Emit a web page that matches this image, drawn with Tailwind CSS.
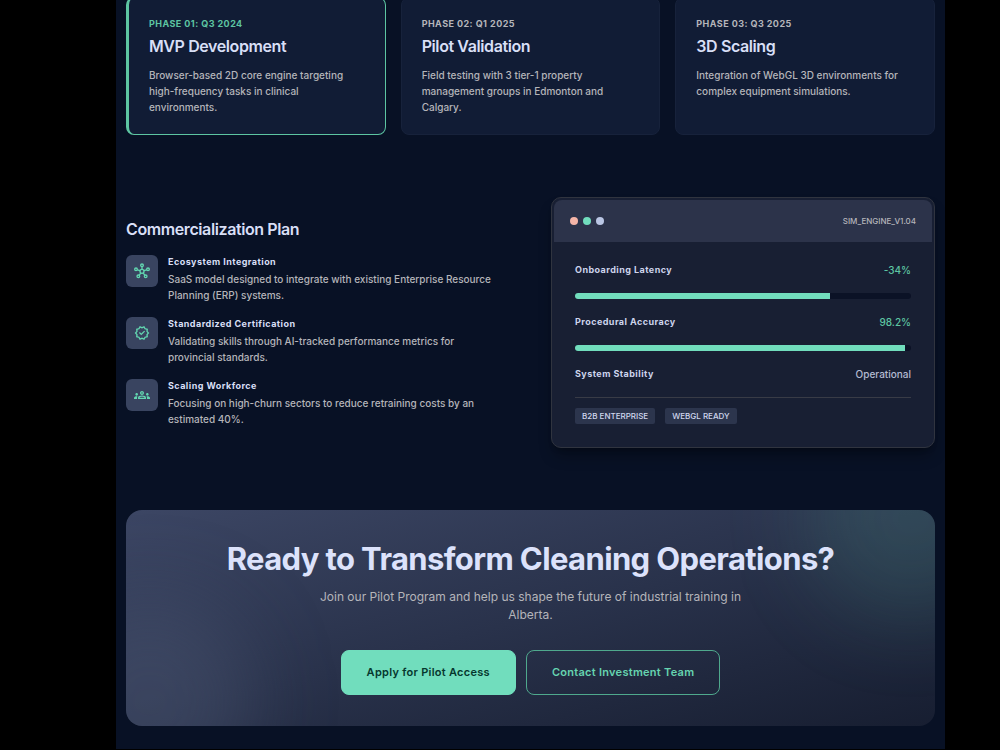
<!DOCTYPE html>
<html lang="en">
<head>
<meta charset="utf-8">
<meta name="viewport" content="width=device-width, initial-scale=1">
<title>Roadmap and Commercialization</title>
<script src="https://cdn.jsdelivr.net/npm/@tailwindcss/browser@4"></script>
</head>
<body class="bg-black pl-[116px] pr-[55px] font-['Inter',sans-serif] text-[10px] text-[#b5b5ba]">
<main class="flex flex-col gap-[62px] overflow-hidden bg-[#081125] px-[10px] pb-[23px]">

  <section aria-label="Roadmap" class="-mt-[3px] grid grid-cols-3 gap-[15px]">
    <article class="rounded-lg border border-l-[3px] border-[#5dc5a2] bg-[#111c35] px-5 py-[19px]">
      <p class="text-[9px] leading-[14px] font-bold tracking-wider text-[#5dc5a2]">PHASE 01: Q3 2024</p>
      <h3 class="mt-[5px] text-base leading-5 font-semibold tracking-tight text-[#d8dff6]">MVP Development</h3>
      <p class="mt-[11px] text-[10px] leading-4 font-medium">Browser-based 2D core engine targeting high-frequency tasks in clinical environments.</p>
    </article>
    <article class="rounded-lg border border-[#17223b] bg-[#111c35] px-5 py-[19px]">
      <p class="text-[9px] leading-[14px] font-bold tracking-wider">PHASE 02: Q1 2025</p>
      <h3 class="mt-[5px] text-base leading-5 font-semibold tracking-tight text-[#d8dff6]">Pilot Validation</h3>
      <p class="mt-[11px] text-[10px] leading-4 font-medium">Field testing with 3 tier-1 property management groups in Edmonton and Calgary.</p>
    </article>
    <article class="rounded-lg border border-[#17223b] bg-[#111c35] px-5 py-[19px]">
      <p class="text-[9px] leading-[14px] font-bold tracking-wider">PHASE 03: Q3 2025</p>
      <h3 class="mt-[5px] text-base leading-5 font-semibold tracking-tight text-[#d8dff6]">3D Scaling</h3>
      <p class="mt-[11px] text-[10px] leading-4 font-medium">Integration of WebGL 3D environments for complex equipment simulations.</p>
    </article>
  </section>

  <section class="grid grid-cols-2 items-center gap-[41px]">
    <div>
      <h2 class="text-base leading-5 font-semibold tracking-tight text-[#d8dff6]">Commercialization Plan</h2>
      <ul class="mt-4 flex flex-col gap-[14px]">
        <li class="flex items-start gap-[10px]">
          <span class="grid size-8 shrink-0 place-items-center rounded-md bg-[#394460] text-[#62d6b0]">
            <svg class="size-4" viewBox="0 0 24 24" fill="none" stroke="currentColor" stroke-width="2" aria-hidden="true">
              <circle cx="12" cy="12.5" r="3"/><circle cx="12" cy="3.5" r="2"/><circle cx="3" cy="9.5" r="2"/><circle cx="21" cy="9.5" r="2"/><circle cx="6.5" cy="20" r="2"/><circle cx="17.500" cy="20" r="2"/>
              <path d="M12 5.500v4M5 10.200l4.200 1.400M19 10.200l-4.200 1.400M7.700 18.400l2.400-3.200M16.300 18.400l-2.400-3.200"/>
            </svg>
          </span>
          <div>
            <h3 class="text-[9px] leading-[14px] font-bold tracking-wider text-[#d8dff6]">Ecosystem Integration</h3>
            <p class="mt-0.5 text-[10px] leading-4 font-medium">SaaS model designed to integrate with existing Enterprise Resource Planning (ERP) systems.</p>
          </div>
        </li>
        <li class="flex items-start gap-[10px]">
          <span class="grid size-8 shrink-0 place-items-center rounded-md bg-[#394460] text-[#62d6b0]">
            <svg class="size-4" viewBox="0 0 24 24" fill="currentColor" aria-hidden="true">
              <path d="M23 12l-2.440-2.790.340-3.690-3.610-.820-1.890-3.200L12 2.960 8.600 1.500 6.710 4.690 3.100 5.500l.340 3.700L1 12l2.440 2.790-.340 3.700 3.610.820L8.600 22.500l3.400-1.470 3.400 1.460 1.890-3.190 3.610-.820-.340-3.690L23 12zm-4.510 2.110l.260 2.790-2.740.620-1.430 2.410L12 18.820l-2.580 1.110-1.430-2.410-2.740-.620.260-2.800L3.660 12l1.850-2.120-.260-2.780 2.740-.610 1.430-2.410L12 5.180l2.580-1.110 1.430 2.410 2.740.620-.260 2.790L20.340 12l-1.850 2.110z"/>
              <path d="M10.950 15.550L16.600 9.900l-1.400-1.450-4.250 4.250-2.150-2.100-1.400 1.400z"/>
            </svg>
          </span>
          <div>
            <h3 class="text-[9px] leading-[14px] font-bold tracking-wider text-[#d8dff6]">Standardized Certification</h3>
            <p class="mt-0.5 text-[10px] leading-4 font-medium">Validating skills through AI-tracked performance metrics for <br>provincial standards.</p>
          </div>
        </li>
        <li class="flex items-start gap-[10px]">
          <span class="grid size-8 shrink-0 place-items-center rounded-md bg-[#394460] text-[#62d6b0]">
            <svg class="size-4" viewBox="0 0 24 24" fill="currentColor" aria-hidden="true">
              <path d="M4 13c1.100 0 2-.900 2-2s-.900-2-2-2-2 .900-2 2 .900 2 2 2zm1.130 1.100c-.370-.060-.740-.100-1.130-.100-.990 0-1.930.210-2.780.580C.480 14.900 0 15.620 0 16.430V18h4.500v-1.610c0-.830.230-1.610.630-2.290zM20 13c1.100 0 2-.900 2-2s-.900-2-2-2-2 .900-2 2 .900 2 2 2zm4 3.430c0-.810-.480-1.530-1.220-1.850-.850-.370-1.790-.580-2.780-.580-.390 0-.760.040-1.130.100.400.680.630 1.460.630 2.290V18H24v-1.570zM16.240 13.650c-1.170-.520-2.610-.900-4.240-.900-1.630 0-3.070.390-4.240.900C6.680 14.130 6 15.210 6 16.390V18h12v-1.610c0-1.180-.680-2.260-1.760-2.740zM8.070 16c.090-.230.130-.390.910-.690.970-.380 1.990-.560 3.020-.560s2.050.180 3.020.560c.770.300.810.460.910.690H8.070zM12 8c.550 0 1 .450 1 1s-.450 1-1 1-1-.450-1-1 .450-1 1-1m0-2c-1.660 0-3 1.340-3 3s1.340 3 3 3 3-1.340 3-3-1.340-3-3-3z"/>
            </svg>
          </span>
          <div>
            <h3 class="text-[9px] leading-[14px] font-bold tracking-wider text-[#d8dff6]">Scaling Workforce</h3>
            <p class="mt-0.5 text-[10px] leading-4 font-medium">Focusing on high-churn sectors to reduce retraining costs by an <br>estimated 40%.</p>
          </div>
        </li>
      </ul>
    </div>

    <div class="rounded-[10px] border border-[#30343f] bg-[#181f33] p-0.5 shadow-lg shadow-black/30">
      <div class="flex h-[42px] items-center justify-between rounded-t-lg bg-[#2c334a] px-4">
        <div class="flex gap-[5px]" aria-hidden="true">
          <span class="size-2 rounded-full bg-[#f5b5a8]"></span>
          <span class="size-2 rounded-full bg-[#71ddbd]"></span>
          <span class="size-2 rounded-full bg-[#bac6e4]"></span>
        </div>
        <span class="text-[8px] leading-3 font-medium">SIM_ENGINE_V1.04</span>
      </div>
      <div class="flex flex-col gap-4 p-[21px]">
        <div class="flex items-center justify-between leading-[14px]">
          <span id="latency" class="text-[9px] font-bold tracking-wider text-[#cdd4ec]">Onboarding Latency</span>
          <span class="text-[10px] font-medium text-[#5dc5a2]">-34%</span>
        </div>
        <div role="progressbar" aria-labelledby="latency" aria-valuenow="76" class="h-1.5 overflow-hidden rounded-full bg-[#0b1226]">
          <div class="h-full bg-[#71ddbd]" style="width:76%"></div>
        </div>
        <div class="flex items-center justify-between leading-[14px]">
          <span id="accuracy" class="text-[9px] font-bold tracking-wider text-[#cdd4ec]">Procedural Accuracy</span>
          <span class="text-[10px] font-medium text-[#5dc5a2]">98.2%</span>
        </div>
        <div role="progressbar" aria-labelledby="accuracy" aria-valuenow="98.2" class="h-1.5 overflow-hidden rounded-full bg-[#0b1226]">
          <div class="h-full bg-[#71ddbd]" style="width:98.2%"></div>
        </div>
        <div class="flex items-center justify-between leading-[14px]">
          <span class="text-[9px] font-bold tracking-wider text-[#cdd4ec]">System Stability</span>
          <span class="text-[10px] font-medium text-[#b4bbd2]">Operational</span>
        </div>
        <div class="flex gap-[10px] border-t border-[#383b46] pt-[10px]">
          <span class="rounded-xs bg-[#2c354d] px-[7px] text-[8px] leading-4 font-medium text-[#d0d7ed]">B2B ENTERPRISE</span>
          <span class="rounded-xs bg-[#2c354d] px-[7px] text-[8px] leading-4 font-medium text-[#d0d7ed]">WEBGL READY</span>
        </div>
      </div>
    </div>
  </section>

  <section class="relative isolate overflow-hidden rounded-2xl bg-linear-165 from-[#3c4664] via-[#29324b] to-[#171e31] px-6 py-[31px] text-center">
    <div class="absolute -top-24 -right-20 -z-10 size-52 rounded-full bg-[#5dc5a2]/15 blur-[40px]"></div>
    <div class="absolute -bottom-20 -left-20 -z-10 size-52 rounded-full bg-[#56617f]/35 blur-[40px]"></div>
    <h2 class="text-[31px] leading-9 font-bold tracking-[-0.02em] text-[#dce2fb]">Ready to Transform Cleaning Operations?</h2>
    <p class="mx-auto mt-[11px] max-w-[436px] text-xs leading-[18px]">Join our Pilot Program and help us shape the future of industrial training in Alberta.</p>
    <div class="mt-[26px] flex justify-center gap-[10px]">
      <button type="button" class="h-[45px] rounded-lg border border-[#71ddbd] bg-[#71ddbd] px-[25px] text-[11px] font-semibold tracking-wide text-[#06372e]">Apply for Pilot Access</button>
      <button type="button" class="h-[45px] rounded-lg border border-[#4fa98d] px-[25px] text-[11px] font-semibold tracking-wide text-[#66d4b0]">Contact Investment Team</button>
    </div>
  </section>
</main>
</body>
</html>
